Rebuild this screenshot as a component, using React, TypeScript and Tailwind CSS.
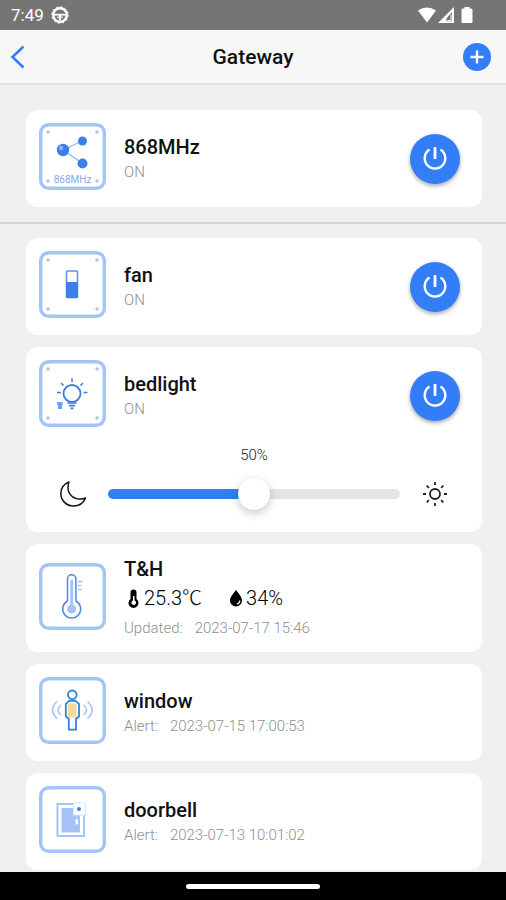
import { useState } from 'react';

const DOTS = [
  [9, 9],
  [58, 9],
  [9, 58],
  [58, 58],
];

function Tile({ screws, children }: any) {
  return (
    <svg
      className="mb-1 size-[67px] shrink-0"
      viewBox="0 0 67 67"
      fill="none"
      aria-hidden="true"
    >
      <rect
        x="1.7"
        y="1.7"
        width="63.6"
        height="63.6"
        rx="8"
        fill="#fff"
        stroke="#a5c3f6"
        strokeWidth="3.4"
      />
      {screws &&
        DOTS.map(([x, y]) => (
          <circle key={`${x}-${y}`} cx={x} cy={y} r="1.7" fill="#a9c0f2" />
        ))}
      {children}
    </svg>
  );
}

function RadioIcon() {
  return (
    <Tile screws>
      <path d="M43 18 24 27l19 13" stroke="#8db4f5" strokeWidth="1.3" />
      <circle cx="24" cy="27" r="6.2" fill="#3b7fe8" />
      <circle cx="22" cy="25" r="2.2" fill="#8fb4ee" />
      <circle cx="43.5" cy="18" r="4.5" fill="#3b7fe8" />
      <circle cx="43.5" cy="40.5" r="5" fill="#3b7fe8" />
      <text
        x="33.5"
        y="60"
        textAnchor="middle"
        fontSize="10"
        fill="#86a8ec"
      >
        868MHz
      </text>
    </Tile>
  );
}

function SwitchIcon() {
  return (
    <Tile screws>
      <rect
        x="27.5"
        y="20"
        width="11"
        height="26.5"
        rx="1"
        fill="#fff"
        stroke="#5e93ea"
        strokeWidth="1.6"
      />
      <path d="M27 31h12v16H27z" fill="#3b80e8" />
    </Tile>
  );
}

function BulbIcon() {
  return (
    <Tile screws>
      <circle cx="33" cy="33.5" r="8.5" stroke="#3b7fdf" strokeWidth="1.8" />
      <path
        d="M28.5 43h9M30 45.7h6M31.5 48.3h3"
        stroke="#3b7fdf"
        strokeWidth="1.7"
      />
      <path
        d="M33 18.5V22M22 23l2.5 2.5M44 23l-2.5 2.5M18 32.5h4M44.5 32.5h4"
        stroke="#3b7fdf"
        strokeWidth="1.6"
      />
      <path d="M18 42h5.5v3H18zM19 45h4v4h-4z" fill="#6f9fea" />
    </Tile>
  );
}

function ThermometerIcon() {
  return (
    <Tile>
      <path
        d="M28.5 38V16a4.2 4.2 0 0 1 8.4 0v22a9 9 0 1 1-8.4 0z"
        stroke="#4a8ae8"
        strokeWidth="1.5"
      />
      <path
        d="M32.7 18v28"
        stroke="#a5c3f6"
        strokeWidth="3"
        strokeLinecap="round"
      />
      <circle cx="32.7" cy="46" r="4.5" fill="#a5c3f6" />
      <path
        d="M39 18.5h4M39 22.5h3M39 26.5h4"
        stroke="#a5c3f6"
        strokeWidth="1.3"
      />
    </Tile>
  );
}

function MotionIcon() {
  return (
    <Tile>
      <g stroke="#2f82dc" strokeWidth="1.8">
        <circle cx="33.3" cy="17.8" r="4.3" />
        <path
          d="M30 23.8h6.6l3.4 3.4v12.3l-3 2.2v11h-7.2v-11l-3-2.2V27.2z"
          fill="#fff"
        />
      </g>
      <rect x="29" y="26.5" width="8.6" height="14" rx="1.5" fill="#fbd898" />
      <g stroke="#a5c3f6" strokeWidth="1.6">
        <path d="M18 24.5q-9 8.500 0 17M22 28q-6 5 0 10" />
        <path d="M48.6 24.5q9 8.500 0 17M44.600 28q6 5 0 10" />
      </g>
    </Tile>
  );
}

function DoorIcon() {
  return (
    <Tile>
      <rect
        x="18.5"
        y="18"
        width="26.5"
        height="32"
        stroke="#a5c3f6"
        strokeWidth="2"
      />
      <path d="M22.5 22H41v24.5H22.5z" fill="#a5c3f6" />
      <path
        d="M34.5 17h12v12h-12z"
        fill="#fff"
        stroke="#dbe7fb"
        strokeWidth="1"
      />
      <circle cx="40" cy="23" r="2" fill="#3b7fe8" />
      <rect x="36.5" y="33" width="2.5" height="5.5" rx="1" fill="#fff" />
    </Tile>
  );
}

function PowerButton({ name }: { name: string }) {
  const [on, setOn] = useState(true);

  return (
    <button
      type="button"
      aria-label={`Power ${name}`}
      aria-pressed={on}
      onClick={() => setOn(!on)}
      className="mr-[9px] flex size-[50px] shrink-0 items-center justify-center rounded-full bg-[#337df8] shadow-[0_2px_4px_rgba(0,0,0,0.35)]"
    >
      <svg
        className="size-7"
        viewBox="0 0 28 28"
        fill="none"
        stroke="#fff"
        strokeWidth="2.4"
        aria-hidden="true"
      >
        <path d="M8.500 4.500a10.300 10.300 0 1 0 11 0" />
        <path d="M14 2v12" strokeWidth="2.8" />
      </svg>
    </button>
  );
}

function Card({ children }: any) {
  return <section className="rounded-xl bg-white">{children}</section>;
}

function Device({ icon, name, children, power }: any) {
  return (
    <div className="flex items-center p-[13px]">
      {icon}
      <div className="ml-[18px] min-w-0 flex-1">
        <h2 className="mb-[2px] text-[20px] leading-6 font-medium text-[#111]">
          {name}
        </h2>
        {children}
      </div>
      {power && <PowerButton name={name} />}
    </div>
  );
}

function State() {
  return (
    <p className="text-[15px] leading-[22px] font-light text-[#8c8c8c]">ON</p>
  );
}

function Stamp({ label, time }: { label: string; time: string }) {
  return (
    <p className="flex gap-3 text-[15px] leading-[22px] font-light text-[#8f8f8f]">
      <span>{label}</span>
      <time>{time}</time>
    </p>
  );
}

function Dimmer() {
  const [level, setLevel] = useState(50);

  return (
    <div className="px-[34px] pt-[1px] pb-[22px] text-center">
      <label
        htmlFor="level"
        className="block text-[15px] leading-5 font-light text-[#222]"
      >
        {level}%
      </label>
      <div className="mt-[13px] flex items-center gap-[22px]">
        <svg
          className="size-[26px] shrink-0"
          viewBox="0 0 26 26"
          fill="none"
          stroke="#111"
          strokeWidth="1.5"
          strokeLinejoin="round"
          aria-hidden="true"
        >
          <path d="M9 1C3.500 3.200.8 7.500.8 12.500.8 19.500 6.500 25 13.500 25c5.500 0 10-3 12-8-1.500.7-3.500 1-5.500 1-7 0-12-5-12-11.500C8 4.500 8.300 2.600 9 1z" />
        </svg>
        <input
          id="level"
          type="range"
          min="0"
          max="100"
          value={level}
          onChange={(e) => setLevel(Number(e.target.value))}
          style={{
            '--track': `linear-gradient(to right, #337df8 ${level}%, #e5e5e5 ${level}%)`,
          } as any}
          className="h-8 min-w-0 flex-1 appearance-none bg-transparent [&::-webkit-slider-runnable-track]:h-[10px] [&::-webkit-slider-runnable-track]:rounded-full [&::-webkit-slider-runnable-track]:[background:var(--track)] [&::-webkit-slider-thumb]:-mt-[11px] [&::-webkit-slider-thumb]:size-8 [&::-webkit-slider-thumb]:appearance-none [&::-webkit-slider-thumb]:rounded-full [&::-webkit-slider-thumb]:bg-white [&::-webkit-slider-thumb]:shadow-[0_3px_10px_rgba(0,0,0,0.22)]"
        />
        <svg
          className="size-[26px] shrink-0"
          viewBox="0 0 26 26"
          fill="none"
          stroke="#222"
          strokeWidth="1.8"
          aria-hidden="true"
        >
          <circle cx="13" cy="13" r="5" />
          <path d="M13 1v3M13 22v3M1 13h3M22 13h3M4.700 4.700l2.200 2.200M19.100 19.100l2.200 2.200M21.300 4.700l-2.200 2.200M6.900 19.100l-2.200 2.200" />
        </svg>
      </div>
    </div>
  );
}

function StatusBar() {
  return (
    <div className="flex h-[30px] items-center bg-[#757575] pr-8 pl-[11px] text-white">
      <span className="text-[17px] leading-5">7:49</span>
      <svg
        className="ml-[7px] size-[18px]"
        viewBox="0 0 18 18"
        fill="none"
        stroke="#fff"
        aria-hidden="true"
      >
        <circle cx="9" cy="9" r="6.8" strokeWidth="2.4" />
        <circle
          cx="9"
          cy="9"
          r="8.2"
          strokeWidth="1"
          strokeDasharray="2.300 2"
        />
        <path d="M3 8.700h12" strokeWidth="1.8" />
        <path d="M6 11.200h6" strokeWidth="1.2" />
        <path d="M9 9v5" strokeWidth="2" />
      </svg>
      <svg
        className="ml-auto h-[18px] w-14"
        viewBox="0 0 56 18"
        fill="#fff"
        aria-hidden="true"
      >
        <path d="M0 4.500Q9 -1.500 18 4.500L9 16.500z" />
        <path
          fillRule="evenodd"
          d="M36 1v16H20zM34 6v9.200h-5.500v-3z"
        />
        <path
          d="M29.500 14.500h3.500V8.500"
          fill="none"
          stroke="#fff"
          strokeWidth="1"
        />
        <path d="M46.500 2.500V1h5v1.500H53q1.500 0 1.500 1.500v12q0 1-1 1h-9q-1 0-1-1V4q0-1.500 1.500-1.500z" />
      </svg>
    </div>
  );
}

function App() {
  return (
    <div className="flex min-h-screen flex-col bg-[#f0f0f0] font-[Roboto,'Noto_Sans_CJK_SC',sans-serif]">
      <StatusBar />
      <header className="grid h-[55px] grid-cols-[1fr_auto_1fr] items-center border-b-2 border-[#e0e0e0] bg-[#f7f7f7] pr-[15px] pl-[15px]">
        <button
          type="button"
          aria-label="Back"
          className="-ml-[6px] justify-self-start"
        >
          <svg
            className="h-6 w-4"
            viewBox="0 0 16 24"
            fill="none"
            stroke="#337df8"
            strokeWidth="2.5"
            aria-hidden="true"
          >
            <path d="M14.500 1.500 3.500 12l11 10.500" />
          </svg>
        </button>
        <h1 className="text-[21px] leading-6 font-medium text-[#111]">
          Gateway
        </h1>
        <button
          type="button"
          aria-label="Add device"
          className="flex size-7 items-center justify-center justify-self-end rounded-full bg-[#337df8]"
        >
          <svg
            className="size-4"
            viewBox="0 0 16 16"
            stroke="#fff"
            strokeWidth="2.4"
            aria-hidden="true"
          >
            <path d="M8 1.500v13M1.500 8h13" />
          </svg>
        </button>
      </header>

      <div className="border-b-2 border-[#d2d2d2] pt-[25px] pr-6 pb-[15px] pl-[26px]">
        <Card>
          <Device icon={<RadioIcon />} name="868MHz" power>
            <State />
          </Device>
        </Card>
      </div>

      <main className="flex flex-1 flex-col gap-3 pt-[14px] pr-6 pb-[2px] pl-[26px]">
        <Card>
          <Device icon={<SwitchIcon />} name="fan" power>
            <State />
          </Device>
        </Card>
        <Card>
          <Device icon={<BulbIcon />} name="bedlight" power>
            <State />
          </Device>
          <Dimmer />
        </Card>
        <Card>
          <Device icon={<ThermometerIcon />} name="T&H">
            <div className="mb-1 flex h-[30px] items-center gap-7 text-[20px] font-light text-black">
              <span className="flex items-center gap-1 pl-1">
                <svg className="h-[19px] w-3" viewBox="0 0 12 19" aria-hidden="true">
                  <path
                    fillRule="evenodd"
                    d="M2.500 3.500a3 3 0 0 1 6 0V10a5 5 0 1 1-6 0zM5 7v4.500a2.300 2.300 0 1 0 1.500 0V7z"
                  />
                </svg>
                25.3℃
              </span>
              <span className="flex items-center gap-1">
                <svg className="h-[18px] w-3" viewBox="0 0 12 18" aria-hidden="true">
                  <path d="M6 1c3 4 6 7 6 10.500a6 6 0 0 1-12 0C0 8 3 5 6 1z" />
                  <path
                    d="M9.800 11.500a3.500 3.500 0 0 1-3 3.500"
                    fill="none"
                    stroke="#fff"
                    strokeWidth="1.2"
                  />
                </svg>
                34%
              </span>
            </div>
            <Stamp label="Updated:" time="2023-07-17 15:46" />
          </Device>
        </Card>
        <Card>
          <Device icon={<MotionIcon />} name="window">
            <Stamp label="Alert:" time="2023-07-15 17:00:53" />
          </Device>
        </Card>
        <Card>
          <Device icon={<DoorIcon />} name="doorbell">
            <Stamp label="Alert:" time="2023-07-13 10:01:02" />
          </Device>
        </Card>
      </main>

      <footer className="sticky bottom-0 flex h-[29px] items-center justify-center bg-black">
        <div className="h-[5px] w-[134px] rounded-full bg-white" />
      </footer>
    </div>
  );
}

export default App;
